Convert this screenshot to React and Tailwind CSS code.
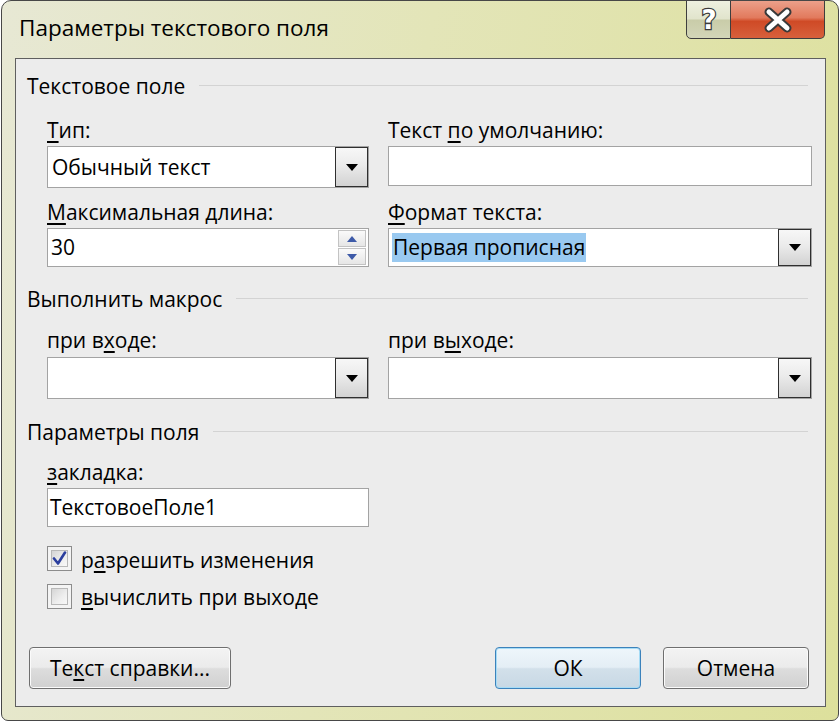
import React from "react";

function U({ children }) {
  return <span className="underline decoration-[1.5px] underline-offset-[3px]">{children}</span>;
}

function Tri({ color = "#000", w = 12, h = 7 }) {
  return (
    <svg width={w} height={h} viewBox={`0 0 ${w} ${h}`}>
      <path d={`M0 0 L${w} 0 L${w / 2} ${h} Z`} fill={color} />
    </svg>
  );
}

function DropBtn() {
  return (
    <div className="w-[33px] h-full border border-[#2f2f2f] bg-[linear-gradient(180deg,#f7f7f7_0%,#ebebeb_45%,#d2d2d2_100%)] flex items-center justify-center">
      <Tri />
    </div>
  );
}

function Combo({ h, children }) {
  return (
    <div className={`${h} flex border border-[#a3a3a3] bg-white`}>
      <div className="flex-1 flex items-center pl-[4px] text-[21px] leading-none">{children}</div>
      <DropBtn />
    </div>
  );
}

function Heading({ children, mt }) {
  return (
    <div className={`${mt} h-[24px] flex items-center pl-[11px] pr-[17px]`}>
      <span className="text-[21px] leading-[24px] whitespace-nowrap">{children}</span>
      <div className="flex-1 ml-[14px] h-[2px] border-t border-[#d3d3d3] border-b-white" />
    </div>
  );
}

function Label({ children, className = "" }) {
  return <div className={`h-[24px] text-[21px] leading-[24px] whitespace-nowrap ${className}`}>{children}</div>;
}

function Check({ checked }) {
  return (
    <div className="w-[25px] h-[25px] border border-[#8c8c8c] bg-[#f4f4f4] p-[3px]">
      <div className="w-full h-full border border-[#b8b8b8] bg-[linear-gradient(135deg,#d5d5d5_0%,#eeeeee_60%,#f8f8f8_100%)] flex items-center justify-center">
        {checked && (
          <svg width="15" height="15" viewBox="0 0 15 15">
            <path d="M2 7.5 L6 12.5 L13 1.5" fill="none" stroke="#2c3f9e" strokeWidth="2.6" strokeLinejoin="round" strokeLinecap="round" />
          </svg>
        )}
      </div>
    </div>
  );
}

function Btn({ children, w, primary }) {
  return (
    <div
      className={`${w} h-[42px] rounded-[4px] border flex items-center justify-center text-[21px] leading-none ${
        primary
          ? "border-[#3c82bb] shadow-[inset_0_0_0_1px_#a6dcf6] bg-[linear-gradient(180deg,#eef6fb_0%,#e4eef5_48%,#d2e0ea_52%,#c8d8e4_100%)]"
          : "border-[#6f6f6f] shadow-[inset_0_0_0_1px_#fbfbfb] bg-[linear-gradient(180deg,#f3f3f3_0%,#ebebeb_48%,#dddddd_52%,#d0d0d0_100%)]"
      }`}
    >
      {children}
    </div>
  );
}

export default function App() {
  return (
    <div className="w-[840px] h-[722px] bg-white font-['Open_Sans','Noto_Sans',sans-serif] text-black">
      <div className="ml-[1px] w-[838px] h-[721px] rounded-t-[10px] rounded-b-[7px] border border-[#474747] bg-[linear-gradient(100deg,#e7e8d4_0%,#e3e5b8_45%,#dde09c_100%)] flex flex-col overflow-hidden">
        {/* Title bar */}
        <div className="h-[57px] flex items-start">
          <div className="pl-[17px] pt-[13px] text-[22.5px] leading-[28px] whitespace-nowrap">Параметры текстового поля</div>
          <div className="flex-1" />
          <div className="flex mr-[13px] -mt-[1px]">
            <div className="w-[45px] h-[39px] border border-[#3e3e3e] rounded-bl-[5px] bg-[linear-gradient(180deg,#eef0e0_0%,#e1e4cc_48%,#c9cca9_52%,#d3d6b8_100%)] flex items-center justify-center">
              <svg width="26" height="30" viewBox="0 0 26 30">
                <text x="13" y="24" textAnchor="middle" fontFamily="DejaVu Sans, sans-serif" fontWeight="bold" fontSize="26" fill="#fff" stroke="#3a3a3a" strokeWidth="2.4" paintOrder="stroke">?</text>
              </svg>
            </div>
            <div className="w-[94px] h-[39px] border border-l-0 border-[#3e3e3e] rounded-br-[5px] bg-[linear-gradient(180deg,#eca08a_0%,#e27a5d_45%,#cf4a26_55%,#d7603c_100%)] flex items-center justify-center">
              <svg width="32" height="26" viewBox="0 0 32 26">
                <path d="M7 5 L25 21 M25 5 L7 21" stroke="#3a3a3a" strokeWidth="9" strokeLinecap="round" />
                <path d="M7 5 L25 21 M25 5 L7 21" stroke="#fff" strokeWidth="5" strokeLinecap="round" />
              </svg>
            </div>
          </div>
        </div>

        {/* Client area */}
        <div className="ml-[13px] mr-[12px] mb-[13px] flex-1 border border-[#5f5f5f] bg-[#ececec] flex flex-col">
          <Heading mt="mt-[15px]">Текстовое поле</Heading>

          <div className="pl-[31px] grid grid-cols-[322px_424px] gap-x-[19px]">
            <Label className="mt-[20px]"><U>Т</U>ип:</Label>
            <Label className="mt-[20px]">Текст <U>п</U>о умолчанию:</Label>

            <div className="mt-[4px]">
              <Combo h="h-[42px]">Обычный текст</Combo>
            </div>
            <div className="mt-[4px] h-[40px] border border-[#a3a3a3] bg-white" />

            <Label className="mt-[12px]"><U>М</U>аксимальная длина:</Label>
            <Label className="mt-[12px]"><U>Ф</U>ормат текста:</Label>

            <div className="mt-[4px] h-[39px] flex border border-[#a3a3a3] bg-white">
              <div className="flex-1 flex items-center pl-[3px] text-[21px] leading-none">30</div>
              <div className="w-[30px] flex flex-col py-[1px] pr-[2px] gap-[1px]">
                <div className="flex-1 border border-[#c3c3c3] bg-[linear-gradient(180deg,#fafafa,#e6e6e6)] flex items-center justify-center">
                  <svg width="10" height="6" viewBox="0 0 10 6"><path d="M0 6 L10 6 L5 0 Z" fill="#3d5aa8" /></svg>
                </div>
                <div className="flex-1 border border-[#c3c3c3] bg-[linear-gradient(180deg,#fafafa,#e6e6e6)] flex items-center justify-center">
                  <svg width="10" height="6" viewBox="0 0 10 6"><path d="M0 0 L10 0 L5 6 Z" fill="#3d5aa8" /></svg>
                </div>
              </div>
            </div>
            <div className="mt-[4px] h-[39px] flex border border-[#a3a3a3] bg-white">
              <div className="flex-1 flex items-center pl-[3px]">
                <span className="bg-[#99c9f0] h-[29px] flex items-center pl-[1px] pr-[1px] text-[21px] leading-none">Первая прописная</span>
              </div>
              <DropBtn />
            </div>
          </div>

          <Heading mt="mt-[20px]">Выполнить макрос</Heading>

          <div className="pl-[31px] grid grid-cols-[322px_424px] gap-x-[19px]">
            <Label className="mt-[17px]">при в<U>х</U>оде:</Label>
            <Label className="mt-[17px]">при в<U>ы</U>ходе:</Label>
            <div className="mt-[5px]">
              <Combo h="h-[42px]"></Combo>
            </div>
            <div className="mt-[5px]">
              <Combo h="h-[42px]"></Combo>
            </div>
          </div>

          <Heading mt="mt-[21px]">Параметры поля</Heading>

          <div className="pl-[31px] flex flex-col">
            <Label className="mt-[16px]"><U>з</U>акладка:</Label>
            <div className="mt-[4px] w-[322px] h-[39px] border border-[#a3a3a3] bg-white flex items-center pl-[2px] text-[21px] leading-none">
              ТекстовоеПоле1
            </div>
            <div className="mt-[19px] h-[25px] flex items-start gap-[9px]">
              <Check checked />
              <div className="text-[21px] leading-[24px] mt-[2px] whitespace-nowrap">р<U>а</U>зрешить изменения</div>
            </div>
            <div className="mt-[13px] h-[25px] flex items-start gap-[9px]">
              <Check />
              <div className="text-[21px] leading-[24px] mt-[1px] whitespace-nowrap"><U>в</U>ычислить при выходе</div>
            </div>
          </div>

          <div className="mt-[38px] pl-[13px] pr-[16px] flex items-center">
            <Btn w="w-[202px]">Те<U>к</U>ст справки...</Btn>
            <div className="flex-1" />
            <Btn w="w-[146px]" primary>ОК</Btn>
            <div className="w-[22px]" />
            <Btn w="w-[146px]">Отмена</Btn>
          </div>
        </div>
      </div>
    </div>
  );
}
